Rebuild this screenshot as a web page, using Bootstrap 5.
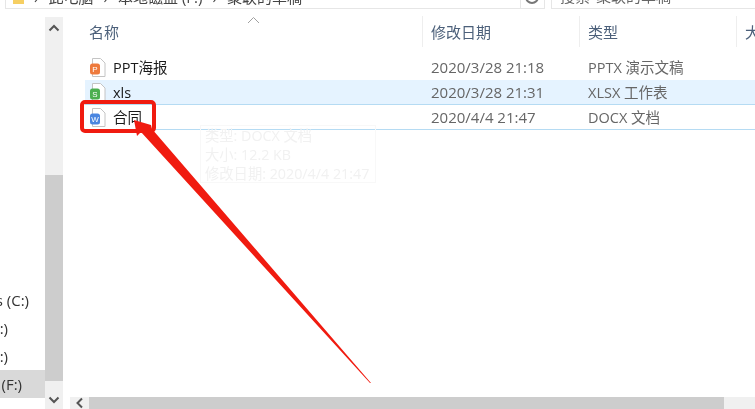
<!DOCTYPE html>
<html lang="zh">
<head>
<meta charset="utf-8">
<title>Explorer</title>
<link href="https://cdn.jsdelivr.net/npm/bootstrap@5.3.0/dist/css/bootstrap.min.css" rel="stylesheet">
<style>
html,body{margin:0;height:409px;overflow:hidden;background:#fff}
body{font-family:"Open Sans","Noto Sans CJK SC",sans-serif;font-size:15px;color:#1f1f1f;position:relative;width:755px;filter:blur(.35px)}
.topstrip{height:9px;overflow:hidden;padding-left:5px}
.addrbox{width:515px;height:9px;border:1px solid #e6e6e6;border-top:0;border-right:0;display:flex;align-items:flex-end;overflow:hidden;color:#444;font-size:15px;line-height:20px;padding-left:7px;gap:10px}
.addrbox span{margin-bottom:1px;white-space:nowrap}
.refbox{width:25px;height:9px;border:1px solid #e6e6e6;border-top:0;position:relative;overflow:hidden}
.refring{width:14px;height:14px;border:2px solid #777;border-radius:50%;margin:-10px 0 0 4px}
.searchbox{width:204px;height:9px;margin-left:6px;border:1px solid #e6e6e6;border-top:0;border-right:0;overflow:hidden;display:flex;align-items:flex-end;color:#666;padding-left:8px;white-space:nowrap}
.searchbox span{margin-bottom:1px}
.workarea{height:400px}
.treecol{width:45px;padding-top:277px;color:#333;overflow:hidden}
.driverow{height:28px;line-height:28px;white-space:nowrap}
.driverow.sel{background:#d9d9d9}
.pad-c{padding-right:16px}.pad-d{padding-right:37px}.pad-f{padding-right:23px}
.vscroll{width:18px;margin-top:8px;background:#f0f0f0;height:392px}
.vthumb{height:206px;margin-top:136px;background:#cdcdcd}
.vbtn{height:22px;display:flex;align-items:center;justify-content:center}
.vbtnend{height:18px;display:flex;align-items:center;justify-content:center}
.mainpane{min-width:0;position:relative;height:400px;overflow:hidden}
.headrow{height:39px;padding-top:7px;color:#4c607a}
.hcol{height:31px;line-height:33px;border-right:1px solid #eee;padding-left:8px;white-space:nowrap;flex-shrink:0}
.c-name{width:360px;padding-left:26px}
.c-date{width:157px}
.c-type{width:157px}
.c-size{width:40px;border-right:0}
.filerow{height:25px;line-height:24px;margin-left:22px;border-bottom:1px solid transparent;color:#666}
.filerow.hov{background:#e5f3ff;border-bottom-color:#b5dbf3}
.filerow.plain{border-bottom-color:#b5dbf3}
.fname{width:338px;padding-left:5px;display:flex;align-items:center;gap:7px;color:#1a1a1a;flex-shrink:0;font-size:14.500px}
.fname span{padding-top:2px}
.fdate{width:157px;padding-left:8px;flex-shrink:0}
.ftype{padding-left:8px;font-size:14.500px;padding-top:1px}
.rowgap{height:7px}
.hscroll{height:12px;margin-top:auto;background:#f0f0f0;margin-left:7px;padding-left:19px}
.hthumb{height:12px;width:635px;background:#cdcdcd;flex-shrink:0}
.hbtn{width:19px;height:12px;margin-left:-19px;display:flex;align-items:center;justify-content:center;flex-shrink:0}
.redframe{position:absolute;left:80px;top:100px;width:76px;height:33px;border:4px solid #f01b10;border-radius:5px}
.arrowlayer{position:absolute;left:0;top:0;width:755px;height:409px;pointer-events:none}
.tipbox{position:absolute;left:200px;top:125px;width:176px;height:58px;border:1px solid #f8f8f8;color:#f1f1f1;font-size:14.300px;line-height:19px;padding:0 4px;white-space:nowrap}
.sortmark{position:absolute;left:184px;top:7px;width:13px;height:8px}
</style>
</head>
<body>
<div class="topstrip d-flex">
  <div class="addrbox">
    <svg width="11" height="8" viewBox="0 0 11 8" class="flex-shrink-0"><rect x="0" y="-6" width="11" height="10" fill="#f6cf63"/></svg>
    <span>›</span><span>此电脑</span><span>›</span><span>本地磁盘 (F:)</span><span>›</span><span>聚联的草稿</span>
  </div>
  <div class="refbox"><div class="refring"></div></div>
  <div class="searchbox"><span>搜索"聚联的草稿"</span></div>
</div>
<div class="workarea d-flex">
  <div class="treecol flex-shrink-0">
    <div class="driverow d-flex justify-content-end pad-c">s (C:)</div>
    <div class="driverow d-flex justify-content-end pad-d">:)</div>
    <div class="driverow d-flex justify-content-end pad-d">:)</div>
    <div class="driverow sel d-flex justify-content-end pad-f">(F:)</div>
  </div>
  <div class="vscroll flex-shrink-0 d-flex flex-column">
    <div class="vbtn"><svg width="12" height="8" viewBox="0 0 12 8"><path d="M1.500 6.500 6 2l4.500 4.500" fill="none" stroke="#555" stroke-width="2"/></svg></div>
    <div class="vthumb flex-shrink-0"></div>
    <div class="flex-grow-1"></div>
    <div class="vbtnend"><svg width="12" height="8" viewBox="0 0 12 8"><path d="M1.500 1.500 6 6l4.500-4.500" fill="none" stroke="#555" stroke-width="2"/></svg></div>
  </div>
  <div class="mainpane flex-grow-1 d-flex flex-column">
    <svg class="sortmark" viewBox="0 0 13 8"><path d="M1 7 6.500 1.500 12 7" fill="none" stroke="#a0a0a0" stroke-width="1"/></svg>
    <div class="headrow d-flex">
      <div class="hcol c-name">名称</div>
      <div class="hcol c-date">修改日期</div>
      <div class="hcol c-type">类型</div>
      <div class="hcol c-size">大</div>
    </div>
    <div class="rowgap"></div>
    <div class="filerow d-flex">
      <div class="fname"><svg width="16" height="19" viewBox="0 0 16 19"><path d="M2.500.5h8l4.500 4.500v13.500h-12.500z" fill="#fff" stroke="#c4c4c4"/><rect x="0" y="5.500" width="10" height="11" rx="2.500" fill="#ee7a3c"/><text x="5" y="14" font-size="8" text-anchor="middle" fill="#fff" font-family="Liberation Sans">P</text></svg><span>PPT海报</span></div>
      <div class="fdate">2020/3/28 21:18</div>
      <div class="ftype">PPTX 演示文稿</div>
    </div>
    <div class="filerow hov d-flex">
      <div class="fname"><svg width="16" height="19" viewBox="0 0 16 19"><path d="M2.500.5h8l4.500 4.500v13.500h-12.500z" fill="#fff" stroke="#c4c4c4"/><rect x="0" y="5.500" width="10" height="11" rx="2.500" fill="#4caf50"/><text x="5" y="14" font-size="8" text-anchor="middle" fill="#fff" font-family="Liberation Sans">S</text></svg><span>xls</span></div>
      <div class="fdate">2020/3/28 21:31</div>
      <div class="ftype">XLSX 工作表</div>
    </div>
    <div class="filerow plain d-flex">
      <div class="fname"><svg width="16" height="19" viewBox="0 0 16 19"><path d="M2.500.5h8l4.500 4.500v13.500h-12.500z" fill="#fff" stroke="#c4c4c4"/><rect x="0" y="5.500" width="10" height="11" rx="2.500" fill="#4a86e0"/><text x="5" y="14" font-size="8" text-anchor="middle" fill="#fff" font-family="Liberation Sans">W</text></svg><span>合同</span></div>
      <div class="fdate">2020/4/4 21:47</div>
      <div class="ftype">DOCX 文档</div>
    </div>
    <div class="hscroll d-flex">
      <div class="hbtn"><svg width="8" height="12" viewBox="0 0 8 12"><path d="M6 1.500 1.500 6 6 10.500" fill="none" stroke="#555" stroke-width="2"/></svg></div>
      <div class="hthumb"></div>
    </div>
  </div>
</div>
<div class="tipbox">类型: DOCX 文档<br>大小: 12.2 KB<br>修改日期: 2020/4/4 21:47</div>
<div class="redframe"></div>
<svg class="arrowlayer" viewBox="0 0 755 409"><polygon points="134,120 151,125 152,129 371,383 370,383 141,132 137,136" fill="#f01b10"/></svg>
<script src="https://cdn.jsdelivr.net/npm/bootstrap@5.3.0/dist/js/bootstrap.bundle.min.js"></script>
</body>
</html>
